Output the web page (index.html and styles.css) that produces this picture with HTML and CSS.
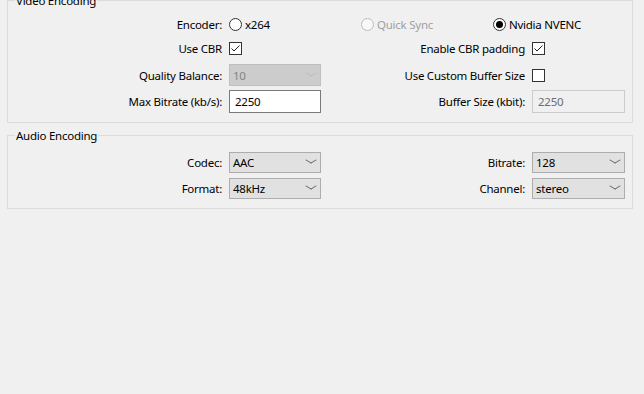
FILE: index.html
```html
<!DOCTYPE html>
<html lang="en">
<head>
<meta charset="UTF-8">
<title>Encoding settings</title>
<link rel="stylesheet" href="styles.css">
</head>
<body>

<div class="page">
    <fieldset class="group group-video">
        <legend>Video Encoding</legend>
        <div class="form-grid">
            <span class="lbl">Encoder:</span>
            <div class="radios">
                <span class="radio-item"><span class="radio"></span>x264</span>
                <span class="radio-item disabled"><span class="radio"></span>Quick Sync</span>
                <span class="radio-item"><span class="radio checked"></span>Nvidia NVENC</span>
            </div>

            <span class="lbl">Use CBR</span>
            <span class="ctl"><span class="check">
                <svg width="11" height="11" viewBox="0 0 11 11"><path d="M1.5 5.5 L4 8 L9.5 2.5" fill="none" stroke="#222" stroke-width="1"/></svg>
            </span></span>
            <span class="lbl">Enable CBR padding</span>
            <span class="ctl"><span class="check">
                <svg width="11" height="11" viewBox="0 0 11 11"><path d="M1.5 5.5 L4 8 L9.5 2.5" fill="none" stroke="#222" stroke-width="1"/></svg>
            </span></span>

            <span class="lbl">Quality Balance:</span>
            <span class="ctl"><span class="combo disabled"><span class="val">10</span><span class="chev"></span></span></span>
            <span class="lbl">Use Custom Buffer Size</span>
            <span class="ctl"><span class="check"></span></span>

            <span class="lbl">Max Bitrate (kb/s):</span>
            <span class="ctl"><span class="edit">2250</span></span>
            <span class="lbl">Buffer Size (kbit):</span>
            <span class="ctl"><span class="edit disabled">2250</span></span>
        </div>
    </fieldset>

    <fieldset class="group group-audio">
        <legend>Audio Encoding</legend>
        <div class="form-grid">
            <span class="lbl">Codec:</span>
            <span class="ctl"><span class="combo"><span class="val">AAC</span><span class="chev"></span></span></span>
            <span class="lbl">Bitrate:</span>
            <span class="ctl"><span class="combo"><span class="val">128</span><span class="chev"></span></span></span>

            <span class="lbl">Format:</span>
            <span class="ctl"><span class="combo"><span class="val">48kHz</span><span class="chev"></span></span></span>
            <span class="lbl">Channel:</span>
            <span class="ctl"><span class="combo"><span class="val">stereo</span><span class="chev"></span></span></span>
        </div>
    </fieldset>
</div>

</body>
</html>
```

FILE: styles.css
```css
body {
    margin: 0;
    background-color: #f0f0f0;
    color: #000;
    font-family: "Noto Sans", "Liberation Sans", sans-serif;
    font-size: 11.5px;
    letter-spacing: -0.25px;
    overflow: hidden;
}
.page {
    margin-top: -7px;
    padding: 0 11px 0 7px;
}
.group {
    margin: 0;
    padding: 0;
    border: 1px solid #dcdcdc;
    min-width: 0;
}
.group legend {
    margin-left: 7px;
    padding: 0 1px;
    line-height: 15px;
}
.group-audio {
    margin-top: 5px;
}
.form-grid {
    display: grid;
    grid-template-columns: 1fr 92px 197px 93px;
    column-gap: 7px;
    padding-right: 7px;
    align-items: center;
}
.group-video .form-grid {
    grid-template-rows: 22px 26px 28px 24px;
    padding-top: 5px;
    padding-bottom: 9px;
}
.group-audio .form-grid {
    grid-template-rows: 26px 26px;
    padding-top: 6px;
    padding-bottom: 7px;
}
.lbl {
    text-align: right;
    white-space: nowrap;
    line-height: 15px;
}
.ctl {
    display: flex;
    align-items: center;
}
.radios {
    grid-column: 2 / 5;
    display: grid;
    grid-template-columns: repeat(3, 1fr);
}
.radio-item {
    display: flex;
    align-items: center;
    gap: 3px;
    line-height: 15px;
}
.radio-item.disabled {
    color: #a0a0a0;
}
.radio {
    box-sizing: border-box;
    width: 13px;
    height: 13px;
    border: 1px solid #333;
    border-radius: 50%;
    background: #fff;
    display: flex;
    align-items: center;
    justify-content: center;
}
.radio-item.disabled .radio {
    border-color: #bcbcbc;
    background: #f7f7f7;
}
.radio.checked::after {
    content: "";
    width: 7px;
    height: 7px;
    border-radius: 50%;
    background: #000;
}
.check {
    box-sizing: border-box;
    width: 13px;
    height: 13px;
    border: 1px solid #333;
    background: #fff;
    display: flex;
}
.combo {
    box-sizing: border-box;
    display: flex;
    align-items: center;
    justify-content: space-between;
    width: 100%;
    height: 21px;
    padding: 0 5px 0 3px;
    background: #e1e1e1;
    border: 1px solid #adadad;
}
.combo.disabled {
    height: 22px;
    background: #cccccc;
    border-color: #bfbfbf;
    color: #838383;
}
.chev {
    width: 8px;
    height: 8px;
    margin-top: -4px;
    box-sizing: border-box;
    border-right: 1px solid #606060;
    border-bottom: 1px solid #606060;
    transform: scaleY(0.6) rotate(45deg);
}
.combo.disabled .chev {
    border-color: #bdbdbd;
}
.edit {
    box-sizing: border-box;
    width: 100%;
    height: 23px;
    line-height: 21px;
    padding: 0 5px;
    background: #fff;
    border: 1px solid #7a7a7a;
}
.edit.disabled {
    background: #f0f0f0;
    border-color: #cccccc;
    color: #6d6d6d;
}
```
